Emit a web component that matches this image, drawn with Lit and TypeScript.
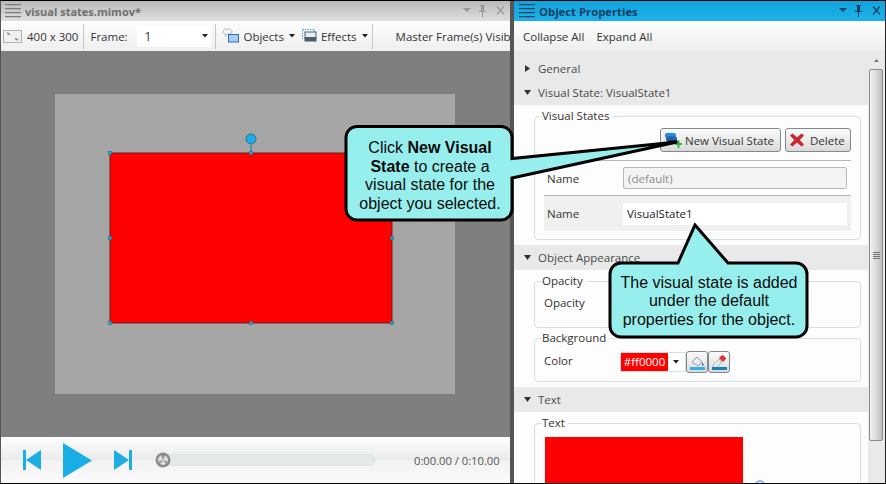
import { LitElement, css, html, svg } from "lit";
import { customElement } from "lit/decorators.js";

const menuIcon = (color: string) => html`
  <svg class="menu" width="16" height="16" viewBox="0 0 16 16">
    ${[1, 5, 9, 13].map((y) => svg`<rect x="0" y=${y} width="16" height="1.2" fill=${color}></rect>`)}
  </svg>
`;

const paneButtons = (color: string) => html`
  <svg class="pane-btns" width="46" height="14" viewBox="0 0 46 14">
    <path d="M5 4h8l-4 4z" fill=${color}></path>
    <path d="M22 1h5v1h-1v5h2v1h-3v5h-1V8h-3V7h2V2h-1z" fill=${color}></path>
    <path d="M39 2.5l7 8M46 2.5l-7 8" stroke=${color} stroke-width="1.2" fill="none"></path>
  </svg>
`;

const caret = html`<svg class="caret" width="6" height="4" viewBox="0 0 6 4"><path d="M0 0h6L3 3.500z" fill="#222"></path></svg>`;

@customElement("mimic-canvas")
export class MimicCanvas extends LitElement {
  static styles = css`
    :host {
      display: block;
      flex: 1;
      position: relative;
      background: #7f7f7f;
    }
    svg {
      position: absolute;
      inset: 0;
    }
  `;

  render() {
    // selection handles on the red object, in canvas coordinates
    const xs = [109, 250, 391];
    const ys = [102, 187, 272];
    const handles: [number, number][] = [];
    for (const x of xs) for (const y of ys) if (!(x === 250 && y === 187)) handles.push([x, y]);
    return html`
      <svg width="509" height="386" viewBox="0 0 509 386">
        <rect x="54" y="43" width="400" height="300" fill="#a6a6a6"></rect>
        <rect x="109" y="102" width="282" height="170" fill="#ff0000" stroke="#6b1c1c" stroke-width="1"></rect>
        <path d="M250 94v8" stroke="#4f7f96" stroke-width="1.5"></path>
        <circle cx="250" cy="88" r="5" fill="#1aaee5" stroke="#30708f"></circle>
        ${handles.map(
          ([x, y]) => svg`<rect x=${x - 1.5} y=${y - 1.5} width="3" height="3" fill="#1aaee5" stroke="#2c6f8e" stroke-width="0.7"></rect>`
        )}
      </svg>
    `;
  }
}

@customElement("app-root")
export class AppRoot extends LitElement {
  static styles = css`
    :host {
      display: block;
      width: 886px;
      height: 484px;
      position: relative;
      overflow: hidden;
      background: #555;
      font-family: "Open Sans", "Liberation Sans", sans-serif;
      font-size: 11.5px;
      color: #333;
    }
    .shell {
      display: flex;
      height: 482px;
      margin-top: 1px;
      gap: 4px;
      padding-left: 1px;
    }
    .pane {
      display: flex;
      flex-direction: column;
      min-width: 0;
    }
    .left {
      width: 509px;
    }
    .right {
      width: 371px;
    }
    .title {
      height: 20px;
      flex: none;
      display: flex;
      align-items: center;
      padding-left: 4px;
      gap: 4px;
      font-weight: 700;
      font-size: 11px;
      background: linear-gradient(#b9b9b9, #dfdfdf);
      color: #707070;
    }
    .right .title {
      background: linear-gradient(#12a3db, #1db2e9);
      color: #123f66;
      font-size: 11.3px;
      padding-left: 5px;
    }
    .pane-btns {
      margin-left: auto;
      margin-right: 6px;
    }
    .right .pane-btns {
      margin-right: 5px;
    }
    .toolbar {
      height: 30px;
      flex: none;
      display: flex;
      align-items: center;
      white-space: nowrap;
      overflow: hidden;
      background: linear-gradient(#fdfdfd, #eeeeee);
    }
    .actions {
      padding-left: 9px;
      gap: 12px;
    }
    .sep {
      width: 1px;
      height: 25px;
      background: #c6c6c6;
      flex: none;
    }
    .size-icon {
      margin-left: 2px;
      margin-right: 5px;
      flex: none;
    }
    .size-sep {
      margin-left: 5px;
    }
    .frame-label {
      margin-left: 6px;
      width: 47px;
      flex: none;
    }
    .combo {
      width: 74px;
      height: 21px;
      display: flex;
      align-items: center;
      background: #fff;
      font-size: 12px;
      padding-left: 7px;
      box-sizing: border-box;
      margin-right: 4px;
      flex: none;
    }
    .combo .caret {
      margin-left: auto;
      margin-right: 3px;
    }
    .tool {
      display: flex;
      align-items: center;
      gap: 3px;
    }
    .tool .caret {
      margin-left: 2px;
    }
    .objects {
      margin: 0 7px 0 6px;
    }
    .effects {
      margin-right: 4px;
    }
    .master {
      margin-left: 23px;
    }
    .controls {
      height: 46px;
      flex: none;
      display: flex;
      align-items: center;
      background: linear-gradient(#fefefe, #ebebeb 48%, #f2f2f2 52%, #fbfbfb);
    }
    .controls .prev {
      margin-left: 22px;
    }
    .controls .play {
      margin-left: 22px;
    }
    .controls .next {
      margin-left: 22px;
    }
    .slider {
      margin-left: 23px;
      width: 220px;
      height: 18px;
      position: relative;
      display: flex;
      align-items: center;
    }
    .slider .track {
      margin-left: 9px;
      flex: 1;
      height: 10px;
      border-radius: 5px;
      background: #e3e9e9;
      border: 1px solid #dde2e2;
    }
    .slider .knob {
      position: absolute;
      left: 0;
      top: 1px;
    }
    .time {
      margin-left: 39px;
      color: #555;
      font-size: 11.2px;
      white-space: nowrap;
    }
    .body {
      flex: 1;
      display: flex;
      min-height: 0;
      background: #e9e9e9;
    }
    .sections {
      flex: 1;
      overflow: hidden;
      padding-top: 5px;
    }
    .head {
      height: 25px;
      display: flex;
      align-items: center;
      padding-left: 9px;
      gap: 6px;
      color: #4a4a4a;
      background: #e9e9e9;
    }
    .head.first {
      height: 24px;
    }
    .head svg {
      width: 9px;
      flex: none;
    }
    .content {
      background: #fdfdfd;
      padding: 3px 7px 5px 20px;
    }
    fieldset {
      margin: 0;
      padding: 0 9px 0 9px;
      border: 1px solid #d5dfe6;
      border-radius: 4px;
      min-width: 0;
    }
    fieldset + fieldset {
      margin-top: 2px;
    }
    legend {
      margin-left: -2px;
      padding: 0 3px 0 0;
      height: 16px;
      line-height: 16px;
      color: #333;
    }
    .buttons {
      display: flex;
      justify-content: flex-end;
      gap: 4px;
      margin-top: 4px;
      height: 24px;
      padding-bottom: 8px;
      border-bottom: 1px solid #b8b8b8;
    }
    button {
      font: inherit;
      color: #333;
      height: 24px;
      padding: 0 0 0 3px;
      display: flex;
      align-items: center;
      gap: 3px;
      border: 1px solid #7f8a8f;
      border-radius: 3px;
      background: linear-gradient(#fbfbfb, #ebebeb 50%, #d9d9d9);
    }
    .add {
      width: 121px;
    }
    .del {
      width: 66px;
      gap: 5px;
    }
    .row {
      display: flex;
      align-items: center;
      height: 34px;
    }
    .row label {
      width: 76px;
      padding-left: 3px;
      flex: none;
    }
    .row.alt {
      height: 36px;
      background: #f0f0f0;
      border-top: 1px solid #b8b8b8;
      margin-bottom: 8px;
      box-sizing: border-box;
    }
    .field {
      width: 224px;
      height: 22px;
      box-sizing: border-box;
      padding-left: 4px;
      display: flex;
      align-items: center;
      background: #fff;
      color: #222;
    }
    .field.off {
      background: #f3f3f3;
      border: 1px solid #b9b9b9;
      border-radius: 2px;
      color: #8c8c8c;
    }
    .plain {
      height: 38px;
      padding-top: 6px;
      box-sizing: border-box;
    }
    .color-row {
      display: flex;
      align-items: center;
      height: 28px;
      margin-top: 2px;
      margin-bottom: 5px;
    }
    .color-row .name {
      width: 76px;
      flex: none;
      margin-top: -3px;
    }
    .swatch {
      width: 66px;
      height: 20px;
      box-sizing: border-box;
      border: 1px solid #d8dee2;
      background: #fff;
      display: flex;
      align-items: center;
      flex: none;
    }
    .swatch span {
      width: 47px;
      height: 18px;
      background: #ff0000;
      color: #fff;
      text-align: center;
      line-height: 18px;
      font-size: 11.5px;
    }
    .swatch .caret {
      margin-left: 5px;
    }
    .mini {
      width: 22px;
      height: 22px;
      padding: 0;
      justify-content: center;
      border-radius: 3px;
      flex: none;
    }
    .text-preview {
      margin-top: 6px;
      width: 198px;
      height: 60px;
      background: #ff0000;
      margin-left: 1px;
    }
    .text-group {
      height: 90px;
      position: relative;
    }
    .text-handle {
      position: absolute;
      left: 220px;
      top: 49px;
      width: 6px;
      height: 6px;
      border: 2px solid #8fbbe8;
      border-radius: 50%;
    }
    .scrollbar {
      width: 17px;
      flex: none;
      position: relative;
      background: #e9e9e9;
    }
    .scrollbar .up {
      position: absolute;
      left: 6px;
      top: 8px;
    }
    .scrollbar .thumb {
      position: absolute;
      left: 1px;
      top: 18px;
      width: 14px;
      height: 372px;
      box-sizing: border-box;
      border: 1px solid #8b8b8b;
      border-radius: 2px;
      background: linear-gradient(90deg, #f2f2f2, #d8d8d8 55%, #bdbdbd);
      display: flex;
      align-items: center;
      justify-content: center;
    }
    .edge-top,
    .edge-bottom {
      position: absolute;
      left: 0;
      right: 0;
      height: 1px;
      background: #000;
    }
    .edge-top {
      top: 0;
    }
    .edge-bottom {
      bottom: 0;
    }
    .edge-right {
      position: absolute;
      right: 0;
      top: 0;
      bottom: 0;
      width: 1px;
      background: #222;
    }
    .overlay {
      position: absolute;
      left: 0;
      top: 0;
    }
    .note {
      position: absolute;
      font-family: "Liberation Sans", Arial, sans-serif;
      font-size: 16px;
      line-height: 18.6px;
      text-align: center;
      color: #0b0b0b;
    }
    .note.one {
      left: 349px;
      top: 139px;
      width: 162px;
    }
    .note.two {
      left: 612px;
      top: 274px;
      width: 194px;
      line-height: 18.3px;
    }
  `;

  renderHead(label: string, open: boolean, first = false) {
    return html`
      <div class="head ${first ? "first" : ""}">
        <svg height="9" viewBox="0 0 9 9">
          ${open ? svg`<path d="M1 2h7L4.5 7z" fill="#333"></path>` : svg`<path d="M2 1l5 3.5L2 8z" fill="#333"></path>`}
        </svg>
        <span>${label}</span>
      </div>
    `;
  }

  render() {
    return html`
      <div class="shell">
        <section class="pane left">
          <div class="title">${menuIcon("#7a7a7a")}<span>visual states.mimov*</span>${paneButtons("#9a9a9a")}</div>
          <div class="toolbar">
            <svg class="size-icon" width="19" height="13" viewBox="0 0 19 13">
              <rect x="0.5" y="0.5" width="18" height="12" fill="#f0f0f0" stroke="#b0b0b0"></rect>
              <path d="M4 3l3 1.500M15 10l-3-1.500" stroke="#8d8d8d" stroke-width="1.5"></path>
            </svg>
            <span>400 x 300</span>
            <i class="sep size-sep"></i>
            <span class="frame-label">Frame:</span>
            <div class="combo"><span>1</span>${caret}</div>
            <i class="sep"></i>
            <div class="tool objects">
              <svg width="18" height="16" viewBox="0 0 18 16">
                <path d="M1 3.500C1 1.500 3 1 5.500 1S10 1.500 10 3.500 8 6 6 6L3.500 8V6C2 6 1 5 1 3.500z" fill="#f4f4f4" stroke="#b5b5b5"></path>
                <rect x="6.500" y="6.500" width="10" height="7.500" fill="#a9cdf0" stroke="#2d6fb5"></rect>
              </svg>
              <span>Objects</span>${caret}
            </div>
            <div class="tool effects">
              <svg width="16" height="14" viewBox="0 0 16 14">
                <rect x="0.500" y="0.500" width="12" height="9" fill="none" stroke="#4ba6e0" stroke-dasharray="1.500 1"></rect>
                <rect x="3" y="3" width="11" height="9" fill="#e7eef5" stroke="#4b5c6d"></rect>
                <rect x="3" y="8" width="11" height="4" fill="#4b5c6d"></rect>
              </svg>
              <span>Effects</span>${caret}
            </div>
            <i class="sep"></i>
            <span class="master">Master Frame(s) Visib</span>
          </div>
          <mimic-canvas></mimic-canvas>
          <div class="controls">
            <svg class="prev" width="18" height="20" viewBox="0 0 18 20"><path d="M0 0h3v20H0zM18 0v20L3 10z" fill="#1aaee5"></path></svg>
            <svg class="play" width="29" height="35" viewBox="0 0 29 35"><path d="M0 0l29 17.500L0 35z" fill="#1aaee5"></path></svg>
            <svg class="next" width="18" height="20" viewBox="0 0 18 20"><path d="M18 0h-3v20h3zM0 0v20l15-10z" fill="#1aaee5"></path></svg>
            <div class="slider">
              <div class="track"></div>
              <svg class="knob" width="16" height="16" viewBox="0 0 16 16">
                <circle cx="8" cy="8" r="7.500" fill="#8c8c8c"></circle>
                <circle cx="8" cy="8" r="5" fill="#dcdcdc"></circle>
                <path d="M8 8L6 3h4zM8 8l-5 2 1.500 2.500zM8 8l5 2-1.500 2.500z" fill="#8f8f8f"></path>
              </svg>
            </div>
            <span class="time">0:00.00 / 0:10.00</span>
          </div>
        </section>
        <section class="pane right">
          <div class="title">${menuIcon("#123f66")}<span>Object Properties</span>${paneButtons("#123f66")}</div>
          <div class="toolbar actions"><span>Collapse All</span><span>Expand All</span></div>
          <div class="body">
            <div class="sections">
              ${this.renderHead("General", false, true)}
              ${this.renderHead("Visual State: VisualState1", true)}
              <div class="content">
                <fieldset>
                  <legend>Visual States</legend>
                  <div class="buttons">
                    <button class="add">
                      <svg width="18" height="17" viewBox="0 0 18 17">
                        <rect x="1" y="1" width="11" height="5" rx="2" fill="#1f8fe0"></rect>
                        <rect x="2" y="4.500" width="11" height="5" rx="2" fill="#2a5fa8"></rect>
                        <rect x="3" y="8" width="11" height="4" rx="2" fill="#1c3c78"></rect>
                        <path d="M11 11h2.500V8.500h2V11H18v2h-2.500v3h-2v-3H11z" fill="#36b34a"></path>
                      </svg>
                      <span>New Visual State</span>
                    </button>
                    <button class="del">
                      <svg width="16" height="14" viewBox="0 0 16 14">
                        <path d="M1 2.500L3.500 0.500 8 4.500l4.500-4 2.500 2L10.800 7 15 11.500 12.500 13.500 8 9.500l-4.500 4L1 11.500 5.200 7z" fill="#c9252b"></path>
                      </svg>
                      <span>Delete</span>
                    </button>
                  </div>
                  <div class="row"><label>Name</label><div class="field off">(default)</div></div>
                  <div class="row alt"><label>Name</label><div class="field">VisualState1</div></div>
                </fieldset>
              </div>
              ${this.renderHead("Object Appearance", true)}
              <div class="content">
                <fieldset>
                  <legend>Opacity</legend>
                  <div class="plain">Opacity</div>
                </fieldset>
                <fieldset>
                  <legend>Background</legend>
                  <div class="color-row">
                    <span class="name">Color</span>
                    <div class="swatch"><span>#ff0000</span>${caret}</div>
                    <button class="mini">
                      <svg width="17" height="17" viewBox="0 0 17 17">
                        <path d="M3 8l5-5 5 5-4 4z" fill="#eceff2" stroke="#9a9a9a"></path>
                        <path d="M13 8l2 3-2 1z" fill="#2a6fb5"></path>
                        <rect x="1" y="13" width="15" height="3" fill="#35aee5"></rect>
                      </svg>
                    </button>
                    <button class="mini">
                      <svg width="17" height="17" viewBox="0 0 17 17">
                        <path d="M2 11l6-6 3 3-6 6H2z" fill="#e3e8ee" stroke="#9a9a9a" stroke-width="0.7"></path>
                        <path d="M8 4l3-3 1.500.5 2 2L15 5l-3 3z" fill="#d9353a"></path>
                        <rect x="1" y="13" width="15" height="3" fill="#1382b5"></rect>
                      </svg>
                    </button>
                  </div>
                </fieldset>
              </div>
              ${this.renderHead("Text", true)}
              <div class="content">
                <fieldset class="text-group">
                  <legend>Text</legend>
                  <div class="text-preview"></div>
                  <div class="text-handle"></div>
                </fieldset>
              </div>
            </div>
            <div class="scrollbar">
              <svg class="up" width="5" height="3" viewBox="0 0 5 3"><path d="M2.500 0L5 3H0z" fill="#777"></path></svg>
              <div class="thumb">
                <svg width="7" height="7" viewBox="0 0 7 7"><path d="M0 .5h7M0 2.500h7M0 4.500h7M0 6.500h7" stroke="#777"></path></svg>
              </div>
            </div>
          </div>
        </section>
      </div>
      <i class="edge-top"></i><i class="edge-bottom"></i><i class="edge-right"></i>
      <svg class="overlay" width="886" height="484" viewBox="0 0 886 484">
        <path
          d="M357 126.500H501a11 11 0 0 1 11 11V158.500L677 142 512 178V209a11 11 0 0 1-11 11H357a11 11 0 0 1-11-11V137.500a11 11 0 0 1 11-11z"
          fill="#97efed" stroke="#000" stroke-width="3" stroke-linejoin="miter"
        ></path>
        <path
          d="M621 263H678L695 225 728 263H796a11 11 0 0 1 11 11V326a11 11 0 0 1-11 11H621a11 11 0 0 1-11-11V274a11 11 0 0 1 11-11z"
          fill="#97efed" stroke="#000" stroke-width="3" stroke-linejoin="miter"
        ></path>
      </svg>
      <div class="note one">Click <b>New Visual State</b> to create a visual state for the object you selected.</div>
      <div class="note two">The visual state is added under the default properties for the object.</div>
    `;
  }
}
